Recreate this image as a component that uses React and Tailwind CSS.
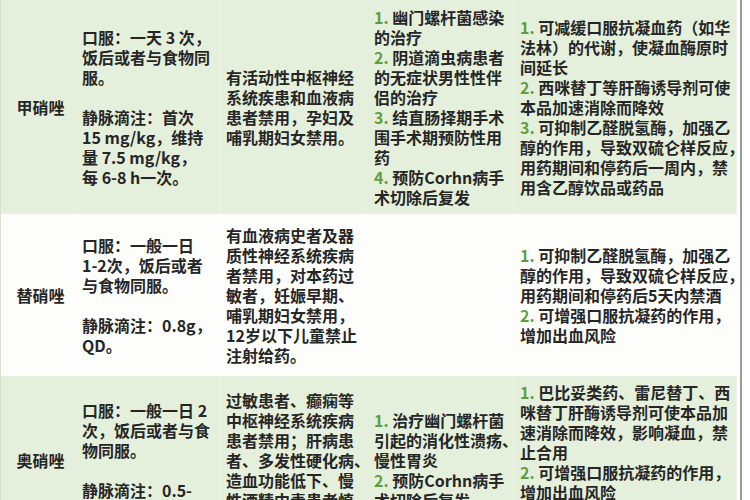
import React from 'react';

const rows = [
  {
    name: '甲硝唑',
    bg: 'bg-[#e5f0dc]',
    h: 'h-[214px]',
    cells: [
      ['口服：一天 3 次，', '饭后或者与食物同', '服。', '', '静脉滴注：首次', '15 mg/kg，维持', '量 7.5 mg/kg，', '每 6-8 h一次。'],
      ['有活动性中枢神经', '系统疾患和血液病', '患者禁用，孕妇及', '哺乳期妇女禁用。'],
      ['1. 幽门螺杆菌感染', '的治疗', '2. 阴道滴虫病患者', '的无症状男性性伴', '侣的治疗', '3. 结直肠择期手术', '围手术期预防性用', '药', '4. 预防Corhn病手', '术切除后复发'],
      ['1. 可减缓口服抗凝血药（如华', '法林）的代谢，使凝血酶原时', '间延长', '2. 西咪替丁等肝酶诱导剂可使', '本品加速消除而降效', '3. 可抑制乙醛脱氢酶，加强乙', '醇的作用，导致双硫仑样反应，', '用药期间和停药后一周内，禁', '用含乙醇饮品或药品'],
    ],
  },
  {
    name: '替硝唑',
    bg: 'bg-[#fdfefc]',
    h: 'h-[162px]',
    cells: [
      ['口服：一般一日', '1-2次，饭后或者', '与食物同服。', '', '静脉滴注：0.8g，', 'QD。'],
      ['有血液病史者及器', '质性神经系统疾病', '者禁用，对本药过', '敏者，妊娠早期、', '哺乳期妇女禁用，', '12岁以下儿童禁止', '注射给药。'],
      [],
      ['1. 可抑制乙醛脱氢酶，加强乙', '醇的作用，导致双硫仑样反应，', '用药期间和停药后5天内禁酒', '2. 可增强口服抗凝药的作用，', '增加出血风险'],
    ],
  },
  {
    name: '奥硝唑',
    bg: 'bg-[#e5f0dc]',
    h: 'h-[168px]',
    cells: [
      ['口服：一般一日 2', '次，饭后或者与食', '物同服。', '', '静脉滴注：0.5-', '1g，每12小时一次。'],
      ['过敏患者、癫痫等', '中枢神经系统疾病', '患者禁用；肝病患', '者、多发性硬化病、', '造血功能低下、慢', '性酒精中毒患者慎', '用。'],
      ['1. 治疗幽门螺杆菌', '引起的消化性溃疡、', '慢性胃炎', '2. 预防Corhn病手', '术切除后复发'],
      ['1. 巴比妥类药、雷尼替丁、西', '咪替丁肝酶诱导剂可使本品加', '速消除而降效，影响凝血，禁', '止合用', '2. 可增强口服抗凝药的作用，', '增加出血风险'],
    ],
  },
];

const cellPad = ['pl-1', 'pl-[6px]', 'pl-[8px]', 'pl-[6px]'];

const Line = ({ text }) => {
  if (text === '') return <div className="h-[20px]" />;
  const m = text.match(/^(\d\.)(.*)$/);
  if (m) {
    return (
      <div className="whitespace-nowrap">
        <span className="text-[#5f9e3f]">{m[1]}</span>
        {m[2]}
      </div>
    );
  }
  return <div className="whitespace-nowrap">{text}</div>;
};

export default function App() {
  return (
    <div className="flex h-[500px] w-[750px] overflow-hidden bg-white font-['Noto_Sans_CJK_SC','Noto_Sans',sans-serif] text-[16px] leading-[20px] font-bold text-[#262626]">
      <div className="flex w-[737px] shrink-0 flex-col border-l border-[#d6e2ce]">
        {rows.map((row) => (
          <div
            key={row.name}
            className={`grid shrink-0 grid-cols-[77px_142px_146px_148px_223px] ${row.bg} ${row.h}`}
          >
            <div className="flex items-center justify-center border-r border-white/25 pl-[3px]">
              {row.name}
            </div>
            {row.cells.map((lines, i) => (
              <div
                key={i}
                className={`flex flex-col justify-center border-r border-white/25 ${cellPad[i]} ${
                  row.name === '奥硝唑' && i === 3 ? 'pb-[36px]' : ''
                }`}
              >
                {lines.map((t, j) => (
                  <Line key={j} text={t} />
                ))}
              </div>
            ))}
          </div>
        ))}
      </div>
      <div className="ml-[3px] w-[2px] shrink-0 bg-[#9c9c9c]" />
    </div>
  );
}
